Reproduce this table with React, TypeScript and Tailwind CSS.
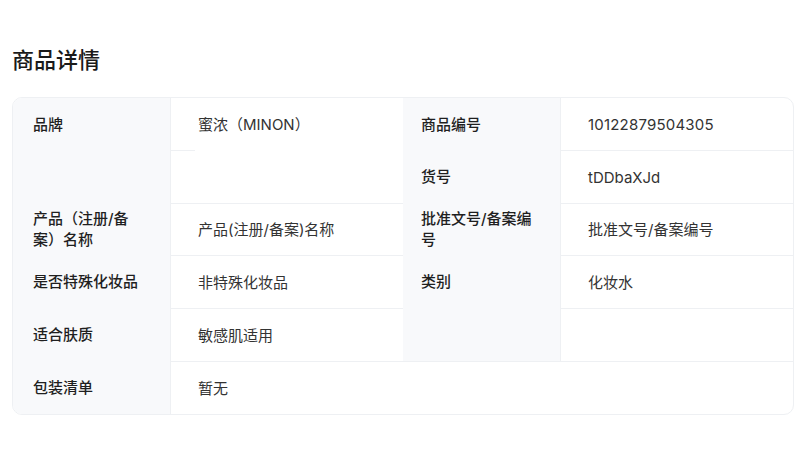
const label =
  "bg-[#f8f9fb] px-5 flex items-center text-[15px] leading-[21px] font-medium text-[#1f1f1f]";
const value =
  "pl-[27px] pr-6 flex items-center text-[15px] leading-[21px] text-[#333] border-l border-t border-[#eef0f3]";

export default function App() {
  return (
    <div
      className="min-h-screen bg-white px-3 pt-[46px]"
      style={{ fontFamily: '"Inter", "Noto Sans CJK SC", "Noto Sans", sans-serif' }}
    >
      <h2 className="text-[22px] leading-7 font-medium text-[#1a1a1a] mb-[23px]">
        商品详情
      </h2>

      <div className="border border-[#eef0f3] rounded-[10px] overflow-hidden grid grid-cols-[157px_1fr_157px_1fr] grid-rows-[52px_53px_52px_53px_53px_53px]">
        {/* row 1-2 */}
        <div className={`${label} row-span-2 items-start pt-[16px]`}>品牌</div>
        <div className="pl-[27px] pr-6 flex items-center text-[15px] leading-[21px] text-[#333] border-l border-[#eef0f3]">
          蜜浓（MINON）
        </div>
        <div className={`${label} pl-[18px]`}>商品编号</div>
        <div className="pl-[27px] pr-6 flex items-center text-[15px] leading-[21px] text-[#333] tracking-[0.2px] border-l border-[#eef0f3]">
          10122879504305
        </div>

        <div className="border-l border-[#eef0f3]">
          <div className="w-6 h-px bg-[#eef0f3]" />
        </div>
        <div className={`${label} pl-[18px]`}>货号</div>
        <div className={value}>tDDbaXJd</div>

        {/* row 3 */}
        <div className={label}>产品（注册/备案）名称</div>
        <div className={value}>产品(注册/备案)名称</div>
        <div className={`${label} pl-[18px]`}>批准文号/备案编号</div>
        <div className={value}>批准文号/备案编号</div>

        {/* row 4 */}
        <div className={label}>是否特殊化妆品</div>
        <div className={value}>非特殊化妆品</div>
        <div className={`${label} pl-[18px]`}>类别</div>
        <div className={value}>化妆水</div>

        {/* row 5 */}
        <div className={label}>适合肤质</div>
        <div className={value}>敏感肌适用</div>
        <div className={label}></div>
        <div className={value}></div>

        {/* row 6 */}
        <div className={label}>包装清单</div>
        <div className={`${value} col-span-3`}>暂无</div>
      </div>
    </div>
  );
}
